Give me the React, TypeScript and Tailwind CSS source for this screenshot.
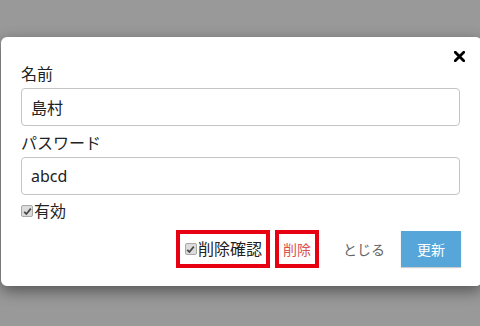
const font = { fontFamily: '"Noto Sans", "Noto Sans CJK JP", sans-serif' };

const CheckMark = () => (
    <span className="inline-flex h-[12px] w-[12px] shrink-0 items-center justify-center rounded-[2px] border border-[#a8a8a8] bg-[#dcdcdc]">
        <svg width="9" height="9" viewBox="0 0 9 9">
            <path d="M1.2 4.8 L3.4 7 L7.8 1.6" fill="none" stroke="#4a4a4a" strokeWidth="1.8" />
        </svg>
    </span>
);

const App = () => {
    return (
        <div className="h-[326px] w-[480px] overflow-hidden bg-[#999999] pl-px pt-[37px] text-[#222]" style={font}>
            <div className="relative w-[481px] rounded-[6px] bg-white px-5 pb-[18px] pt-[25px] shadow-[0_5px_15px_rgba(0,0,0,0.45)]">
                <button className="absolute right-[17px] top-[14px] p-0">
                    <svg width="11" height="11" viewBox="0 0 11 11">
                        <path d="M1.3 1.3 L9.7 9.7 M9.7 1.3 L1.3 9.7" stroke="#000" strokeWidth="2.8" strokeLinecap="square" />
                    </svg>
                </button>

                <label className="block text-[16px] leading-[24px]">名前</label>
                <input
                    readOnly
                    value="島村"
                    className="mt-[2px] block h-[38px] w-[439px] rounded-[4px] border border-[#c4c4c4] px-[9px] text-[16px] outline-none"
                    style={font}
                />

                <label className="mt-[5px] block text-[16px] leading-[24px]">パスワード</label>
                <input
                    readOnly
                    value="abcd"
                    className="mt-[2px] block h-[38px] w-[439px] rounded-[4px] border border-[#c4c4c4] px-[9px] text-[16px] outline-none"
                    style={font}
                />

                <div className="mt-[4px] flex items-center gap-[1px] text-[16px] leading-[24px]">
                    <CheckMark />
                    <span>有効</span>
                </div>

                <div className="mr-[1px] mt-[7px] flex items-center justify-end">
                    <div className="flex h-[38px] items-center gap-[1px] border-[4px] border-[#e60012] pl-[5px] pr-[4px] text-[16px]">
                        <CheckMark />
                        <span>削除確認</span>
                    </div>
                    <div className="ml-[5px] flex h-[38px] items-center border-[4px] border-[#e60012] px-[4px] text-[14px] text-[#d9534f]">
                        削除
                    </div>
                    <button className="ml-[12px] h-[36px] px-[12px] text-[14px] text-[#666]">とじる</button>
                    <button className="ml-[4px] h-[36px] w-[60px] bg-[#57a6da] text-[14px] text-white shadow-[0_1px_1px_rgba(0,0,0,0.2)]">
                        更新
                    </button>
                </div>
            </div>
        </div>
    );
};

export default App;
